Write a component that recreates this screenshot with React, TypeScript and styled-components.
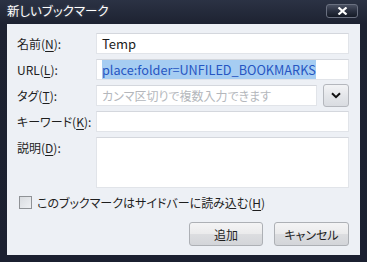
import React from 'react';
import styled, { createGlobalStyle } from 'styled-components';

const GlobalStyle = createGlobalStyle`
  html, body {
    margin: 0;
    padding: 0;
    background: #1b2030;
  }
  body {
    font-family: "Noto Sans CJK JP", "Noto Sans", sans-serif;
    font-feature-settings: "palt";
  }
`;

const Window = styled.div`
  width: 367px;
  height: 262px;
  box-sizing: border-box;
  display: flex;
  flex-direction: column;
  background: linear-gradient(180deg, #2b3244 0px, #1d2231 24px, #1b2030 100%);
  padding: 0 7px 7px;
`;

const TitleBar = styled.div`
  height: 24px;
  display: flex;
  align-items: center;
  justify-content: space-between;
`;

const Title = styled.span`
  color: #ffffff;
  font-size: 12.5px;
  line-height: 1;
  margin-top: -1px;
  text-shadow: 0 0 3px rgba(255, 255, 255, 0.25);
`;

const CloseButton = styled.div`
  width: 32px;
  height: 14px;
  margin: -3px 2px 0 0;
  box-sizing: border-box;
  border: 1px solid #6a7080;
  border-radius: 3px;
  background: linear-gradient(180deg, #4a5162 0%, #2a3040 50%, #151a26 100%);
  display: flex;
  align-items: center;
  justify-content: center;
`;

const Content = styled.div`
  flex: 1;
  background: #edf0f5;
  padding: 9px 11px 0 10px;
  display: flex;
  flex-direction: column;
`;

const Form = styled.div`
  display: grid;
  grid-template-columns: 79px 1fr;
  row-gap: 5px;
`;

const Label = styled.label<{ $top?: boolean }>`
  font-size: 12px;
  color: #1e1e1e;
  height: 21px;
  display: flex;
  align-items: ${(p) => (p.$top ? 'flex-start' : 'center')};
  padding-top: ${(p) => (p.$top ? '2px' : '0')};
  white-space: nowrap;

  u {
    text-decoration: underline;
    text-underline-offset: 2px;
  }
`;

const Field = styled.div<{ $tall?: boolean }>`
  height: ${(p) => (p.$tall ? '51px' : '21px')};
  box-sizing: border-box;
  background: #ffffff;
  border: 1px solid #e1e4e9;
  border-top-color: #d4d7dd;
  padding: 0 5px;
  display: flex;
  align-items: ${(p) => (p.$tall ? 'flex-start' : 'center')};
  font-size: 13px;
  color: #1a1a1a;
  flex: 1;
  min-width: 0;
  white-space: nowrap;
  overflow: hidden;
`;

const Placeholder = styled.span`
  color: #b4b7bc;
  font-size: 12px;
`;

const Selected = styled.span`
  background: #a6cdf2;
  color: #2656c2;
  font-size: 12.7px;
`;

const TagRow = styled.div`
  display: flex;
  gap: 6px;
  align-items: center;
`;

const DropButton = styled.div`
  width: 26px;
  height: 23px;
  margin: -1px 0;
  box-sizing: border-box;
  border: 1px solid #b4b7bd;
  border-radius: 3px;
  background: linear-gradient(180deg, #f3f4f6 0%, #e4e6ea 50%, #d9dce1 100%);
  display: flex;
  align-items: center;
  justify-content: center;
`;

const CheckRow = styled.div`
  display: flex;
  align-items: center;
  gap: 5px;
  margin: 6px 0 0 2px;
  font-size: 12px;
  color: #1e1e1e;

  u {
    text-underline-offset: 2px;
  }
`;

const CheckBox = styled.span`
  width: 13px;
  height: 13px;
  box-sizing: border-box;
  border: 1px solid #8f9296;
  background: linear-gradient(135deg, #d9dce0 0%, #eef0f3 100%);
`;

const Buttons = styled.div`
  display: flex;
  justify-content: flex-end;
  gap: 11px;
  margin-top: 11px;
`;

const Button = styled.div<{ $width: number }>`
  width: ${(p) => p.$width}px;
  height: 24px;
  box-sizing: border-box;
  border: 1px solid #adb0b5;
  border-radius: 3px;
  background: linear-gradient(180deg, #f4f4f5 0%, #ebebec 48%, #dcdde0 52%, #d3d5d9 100%);
  display: flex;
  align-items: center;
  justify-content: center;
  font-size: 12px;
  color: #1e1e1e;
`;

export default function App(): React.ReactElement {
  return (
    <>
      <GlobalStyle />
      <Window>
        <TitleBar>
          <Title>新しいブックマーク</Title>
          <CloseButton>
            <svg width="11" height="8" viewBox="0 0 11 8">
              <path d="M1.5 0.5 L9.5 7.5 M9.5 0.5 L1.5 7.5" stroke="#ffffff" strokeWidth="2.2" />
            </svg>
          </CloseButton>
        </TitleBar>
        <Content>
          <Form>
            <Label>名前(<u>N</u>):</Label>
            <Field>Temp</Field>

            <Label>URL(<u>L</u>):</Label>
            <Field>
              <Selected>place:folder=UNFILED_BOOKMARKS</Selected>
            </Field>

            <Label>タグ(<u>T</u>):</Label>
            <TagRow>
              <Field>
                <Placeholder>カンマ区切りで複数入力できます</Placeholder>
              </Field>
              <DropButton>
                <svg width="10" height="7" viewBox="0 0 10 7">
                  <path d="M1 1.2 L5 5.2 L9 1.2" fill="none" stroke="#111111" strokeWidth="2" />
                </svg>
              </DropButton>
            </TagRow>

            <Label>キーワード(<u>K</u>):</Label>
            <Field />

            <Label $top>説明(<u>D</u>):</Label>
            <Field $tall />
          </Form>

          <CheckRow>
            <CheckBox />
            <span>
              このブックマークはサイドバーに読み込む(<u>H</u>)
            </span>
          </CheckRow>

          <Buttons>
            <Button $width={74}>追加</Button>
            <Button $width={75}>キャンセル</Button>
          </Buttons>
        </Content>
      </Window>
    </>
  );
}
